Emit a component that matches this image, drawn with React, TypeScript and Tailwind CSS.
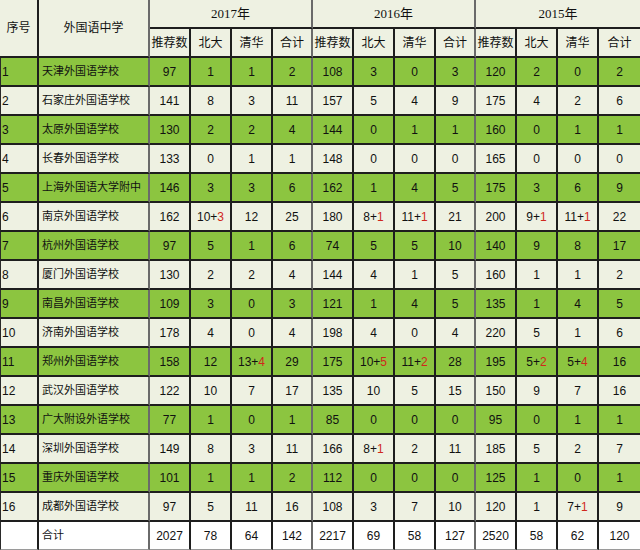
import React from "react";

type Row = { n: string; name: string; v: string[] };

const rows: Row[] = [
  { n: "1", name: "天津外国语学校", v: ["97", "1", "1", "2", "108", "3", "0", "3", "120", "2", "0", "2"] },
  { n: "2", name: "石家庄外国语学校", v: ["141", "8", "3", "11", "157", "5", "4", "9", "175", "4", "2", "6"] },
  { n: "3", name: "太原外国语学校", v: ["130", "2", "2", "4", "144", "0", "1", "1", "160", "0", "1", "1"] },
  { n: "4", name: "长春外国语学校", v: ["133", "0", "1", "1", "148", "0", "0", "0", "165", "0", "0", "0"] },
  { n: "5", name: "上海外国语大学附中", v: ["146", "3", "3", "6", "162", "1", "4", "5", "175", "3", "6", "9"] },
  { n: "6", name: "南京外国语学校", v: ["162", "10+3", "12", "25", "180", "8+1", "11+1", "21", "200", "9+1", "11+1", "22"] },
  { n: "7", name: "杭州外国语学校", v: ["97", "5", "1", "6", "74", "5", "5", "10", "140", "9", "8", "17"] },
  { n: "8", name: "厦门外国语学校", v: ["130", "2", "2", "4", "144", "4", "1", "5", "160", "1", "1", "2"] },
  { n: "9", name: "南昌外国语学校", v: ["109", "3", "0", "3", "121", "1", "4", "5", "135", "1", "4", "5"] },
  { n: "10", name: "济南外国语学校", v: ["178", "4", "0", "4", "198", "4", "0", "4", "220", "5", "1", "6"] },
  { n: "11", name: "郑州外国语学校", v: ["158", "12", "13+4", "29", "175", "10+5", "11+2", "28", "195", "5+2", "5+4", "16"] },
  { n: "12", name: "武汉外国语学校", v: ["122", "10", "7", "17", "135", "10", "5", "15", "150", "9", "7", "16"] },
  { n: "13", name: "广大附设外语学校", v: ["77", "1", "0", "1", "85", "0", "0", "0", "95", "0", "1", "1"] },
  { n: "14", name: "深圳外国语学校", v: ["149", "8", "3", "11", "166", "8+1", "2", "11", "185", "5", "2", "7"] },
  { n: "15", name: "重庆外国语学校", v: ["101", "1", "1", "2", "112", "0", "0", "0", "125", "1", "0", "1"] },
  { n: "16", name: "成都外国语学校", v: ["97", "5", "11", "16", "108", "3", "7", "10", "120", "1", "7+1", "9"] },
];

const total = ["2027", "78", "64", "142", "2217", "69", "58", "127", "2520", "58", "62", "120"];

function Num({ v }: { v: string }) {
  if (v.includes("+")) {
    const [a, b] = v.split("+");
    return (
      <>
        {a}+<span className="text-[#d0281c]">{b}</span>
      </>
    );
  }
  return <>{v}</>;
}

const sub = ["推荐数", "北大", "清华", "合计"];

function rightBorder(i: number) {
  if (i === 11) return "";
  if (i === 3 || i === 7) return "border-r-2 border-r-[#6a6a6a]";
  return "border-r-2 border-r-[#1e1e1e]";
}

export default function App() {
  return (
    <div
      className="w-[640px] h-[550px] overflow-hidden bg-white text-[12px] text-[#111]"
      style={{ fontFamily: '"Liberation Sans", "Noto Sans CJK SC", sans-serif' }}
    >
      <div className="grid grid-cols-[39px_111px_41px_41px_41px_40px_41px_41px_41px_40px_41px_41px_41px_41px] grid-rows-[29px_29px_repeat(16,29px)_28px]">
        {/* Header */}
        <div className="row-span-2 flex items-center justify-center bg-[#eef1e2] border-r-2 border-r-[#1e1e1e] border-b-2 border-b-[#1e1e1e]">
          序号
        </div>
        <div className="row-span-2 flex items-center justify-center bg-[#eef1e2] border-r-2 border-r-[#6a6a6a] border-b-2 border-b-[#1e1e1e]">
          外国语中学
        </div>
        {["2017年", "2016年", "2015年"].map((y, gi) => (
          <div
            key={y}
            className={`col-span-4 flex items-center justify-center bg-[#eef1e2] border-b-2 border-b-[#1e1e1e] ${
              gi < 2 ? "border-r-2 border-r-[#6a6a6a]" : ""
            }`}
            style={{ fontFamily: '"Liberation Serif", "Noto Sans CJK SC", serif' }}
          >
            <span className="text-[13px]">{y}</span>
          </div>
        ))}
        {Array.from({ length: 12 }).map((_, i) => (
          <div
            key={"s" + i}
            className={`flex items-center justify-center bg-[#eef1e2] border-b-2 border-b-[#1e1e1e] ${rightBorder(i)}`}
          >
            {sub[i % 4]}
          </div>
        ))}

        {/* Data rows */}
        {rows.map((r, ri) => {
          const bg = ri % 2 === 0 ? "bg-[#8cc540]" : "bg-[#eef1e2]";
          return (
            <React.Fragment key={r.n}>
              <div
                className={`${bg} flex items-center pl-[1px] border-l border-l-[#2a2a2a] border-r-2 border-r-[#1e1e1e] border-b-2 border-b-[#1e1e1e]`}
              >
                {r.n}
              </div>
              <div
                className={`${bg} flex items-center pl-[3px] text-[11px] border-r-2 border-r-[#6a6a6a] border-b-2 border-b-[#1e1e1e] whitespace-nowrap`}
              >
                {r.name}
              </div>
              {r.v.map((v, i) => (
                <div
                  key={i}
                  className={`${bg} flex items-center justify-center border-b-2 border-b-[#1e1e1e] ${rightBorder(i)} whitespace-nowrap`}
                >
                  <Num v={v} />
                </div>
              ))}
            </React.Fragment>
          );
        })}

        {/* Total row */}
        <div className="bg-white border-l border-l-[#2a2a2a] border-r-2 border-r-[#1e1e1e] border-b border-b-[#9a9a9a]"></div>
        <div className="bg-white flex items-center pl-[3px] text-[11px] border-r-2 border-r-[#6a6a6a] border-b border-b-[#9a9a9a]">
          合计
        </div>
        {total.map((v, i) => (
          <div
            key={"t" + i}
            className={`bg-white flex items-center justify-center border-b border-b-[#9a9a9a] ${rightBorder(i)}`}
          >
            {v}
          </div>
        ))}
      </div>
    </div>
  );
}
